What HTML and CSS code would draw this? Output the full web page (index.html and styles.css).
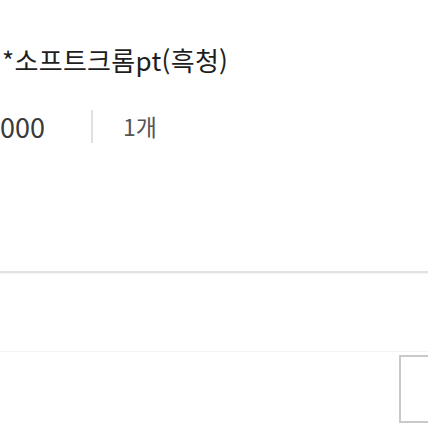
FILE: index.html
```html
<!DOCTYPE html>
<html lang="ko">
<head>
  <meta charset="UTF-8" />
  <meta name="viewport" content="width=device-width, initial-scale=1" />
  <title>옵션</title>
  <link rel="stylesheet" href="styles.css">
</head>
<body>
  <main class="item">
    <h1 class="item-name">*소프트크롬pt(흑청)</h1>
    <div class="item-meta">
      <span class="item-price">000</span>
      <span class="item-divider"></span>
      <span class="item-qty">1개</span>
    </div>
  </main>

  <div class="section-line"></div>

  <footer class="bottom-bar">
    <div class="bottom-box"></div>
  </footer>
</body>
</html>
```

FILE: styles.css
```css
* {
  margin: 0; padding: 0; box-sizing: border-box;
}
body {
  background: #fff;
  width: 428px;
  height: 428px;
  overflow: hidden;
  font-family: "Noto Sans CJK KR", "Noto Sans", sans-serif;
  color: #222;
}

.item {
  padding-top: 43px;
  height: 271px;
}

.item-name {
  font-size: 26px;
  font-weight: 400;
  line-height: 34px;
  letter-spacing: 0.3px;
  margin-left: 2px;
  white-space: nowrap;
  color: #1e1e1e;
}

.item-meta {
  display: flex;
  align-items: center;
  margin-top: 32px;
  height: 34px;
}
.item-price {
  font-size: 27px;
  color: #3a3a3a;
  width: 91px;
}
.item-divider {
  width: 2px;
  height: 33px;
  background: #e0e0e0;
}
.item-qty {
  font-size: 23px;
  color: #555;
  margin-left: 30px;
}

.section-line {
  height: 2px;
  background: #e2e2e2;
  box-shadow: 0 1px 2px #f2f2f2;
}

.bottom-bar {
  margin-top: 78px;
  border-top: 1px solid #f3f3f3;
  padding-top: 3px;
}
.bottom-box {
  margin-left: 399px;
  height: 68px;
  border: 2px solid #c9c9c9;
  border-right: none;
}
```
